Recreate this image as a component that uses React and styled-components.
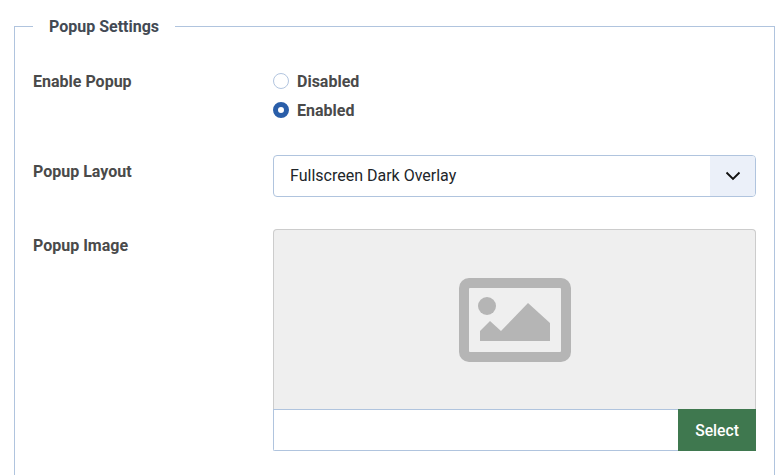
import React from "react";
import styled, { createGlobalStyle } from "styled-components";

const GlobalStyle = createGlobalStyle`
  html, body {
    margin: 0;
    padding: 0;
    height: 475px;
    overflow: hidden;
    background: #fff;
    font-family: Roboto, "Liberation Sans", sans-serif;
    color: #4a4a4a;
  }
`;

const Page = styled.div`
  padding: 14px 2px 0 14px;
`;

const Fieldset = styled.fieldset`
  box-sizing: border-box;
  margin: 0;
  min-width: 0;
  height: 461px;
  padding: 33px 18px 0 18px;
  border: 1px solid #b0c4de;
  border-bottom: 0;
  border-radius: 0;
`;

const Legend = styled.legend`
  padding: 2px 16px 0;
  font-size: 16px;
  line-height: 22px;
  font-weight: 700;
  color: #434a54;
`;

const Row = styled.div`
  display: grid;
  grid-template-columns: 240px 483px;
  margin-bottom: ${(p) => p.$gap || 32}px;
`;

const Label = styled.label`
  padding-top: ${(p) => p.$top || 0}px;
  font-size: 16px;
  line-height: 22px;
  font-weight: 700;
  color: #4a4a4a;
`;

const RadioList = styled.div`
  display: flex;
  flex-direction: column;
  gap: 7px;
  margin-top: -1px;
`;

const RadioRow = styled.div`
  display: flex;
  align-items: center;
  gap: 8px;
  height: 22px;
  font-size: 16px;
  font-weight: 700;
`;

const RadioDot = styled.span`
  box-sizing: border-box;
  width: 16px;
  height: 16px;
  border-radius: 50%;
  background: #fff;
  border: ${(p) => (p.$on ? "5px solid #2a5ea9" : "1px solid #b2c5df")};
`;

const SelectBox = styled.div`
  box-sizing: border-box;
  display: flex;
  height: 42px;
  border: 1px solid #b0c4de;
  border-radius: 4px;
  overflow: hidden;
`;

const SelectValue = styled.div`
  flex: 1;
  padding-left: 16px;
  font-size: 16px;
  line-height: 40px;
  color: #212529;
`;

const SelectArrow = styled.div`
  width: 45px;
  display: flex;
  align-items: center;
  justify-content: center;
  background: #ebf0f9;
`;

const Media = styled.div`
  display: flex;
  flex-direction: column;
`;

const Preview = styled.div`
  box-sizing: border-box;
  height: 180px;
  display: flex;
  align-items: center;
  justify-content: center;
  background: #efefef;
  border: 1px solid #ccc;
  border-bottom: 0;
  border-radius: 4px 4px 0 0;
`;

const InputRow = styled.div`
  display: flex;
  height: 42px;
`;

const PathInput = styled.div`
  flex: 1;
  box-sizing: border-box;
  background: #fff;
  border: 1px solid #b0c4de;
  border-right: 0;
  border-radius: 0 0 0 2px;
`;

const SelectButton = styled.div`
  width: 78px;
  display: flex;
  align-items: center;
  justify-content: center;
  background: #3f784f;
  color: #fff;
  font-size: 15.7px;
  font-weight: 500;
`;

const Chevron = () => (
  <svg width="16" height="10" viewBox="0 0 16 10" fill="none">
    <path d="M1.5 1.5 8 8l6.5-6.5" stroke="#111" strokeWidth="1.9" />
  </svg>
);

const ImageIcon = () => (
  <svg width="112" height="84" viewBox="0 0 112 84">
    <path
      fill="#b5b5b5"
      fillRule="evenodd"
      d="M10 0h92a10 10 0 0 1 10 10v64a10 10 0 0 1-10 10H10A10 10 0 0 1 0 74V10A10 10 0 0 1 10 0Zm1 10a1 1 0 0 0-1 1v62a1 1 0 0 0 1 1h90a1 1 0 0 0 1-1V11a1 1 0 0 0-1-1H11Z"
    />
    <circle cx="28" cy="28" r="9" fill="#b5b5b5" />
    <path fill="#b5b5b5" d="M21 63V53l10-10 11 10 27-28 22 20v18Z" />
  </svg>
);

export default function App() {
  return (
    <Page>
      <GlobalStyle />
      <Fieldset>
        <Legend>Popup Settings</Legend>
        <Row $gap={34}>
          <Label>Enable Popup</Label>
          <RadioList>
            <RadioRow>
              <RadioDot />
              Disabled
            </RadioRow>
            <RadioRow>
              <RadioDot $on />
              Enabled
            </RadioRow>
          </RadioList>
        </Row>
        <Row>
          <Label $top={6}>Popup Layout</Label>
          <SelectBox>
            <SelectValue>Fullscreen Dark Overlay</SelectValue>
            <SelectArrow>
              <Chevron />
            </SelectArrow>
          </SelectBox>
        </Row>
        <Row>
          <Label $top={6}>Popup Image</Label>
          <Media>
            <Preview>
              <ImageIcon />
            </Preview>
            <InputRow>
              <PathInput />
              <SelectButton>Select</SelectButton>
            </InputRow>
          </Media>
        </Row>
      </Fieldset>
    </Page>
  );
}
